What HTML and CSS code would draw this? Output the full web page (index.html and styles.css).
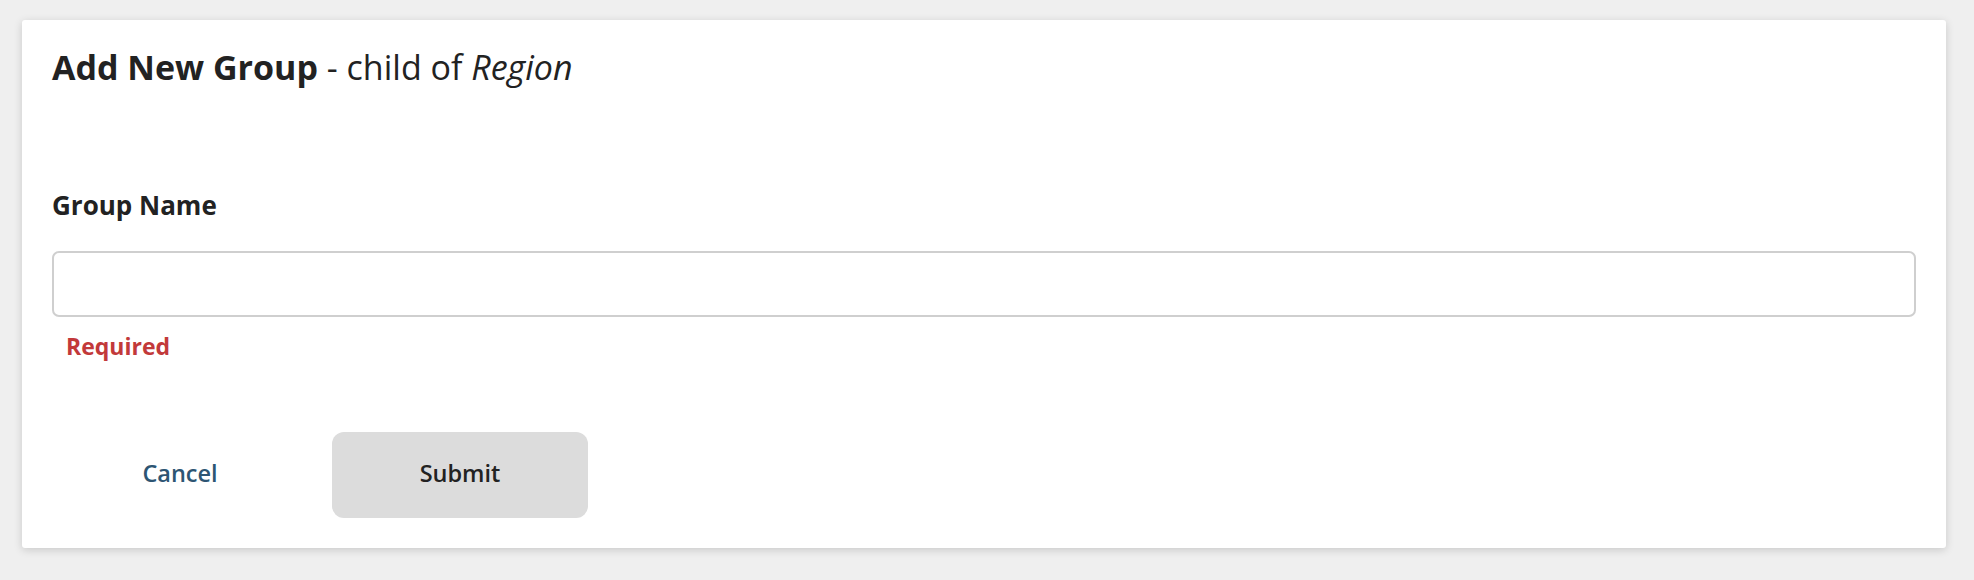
FILE: index.html
```html
<!DOCTYPE html>
<html lang="en">
<head>
<meta charset="utf-8">
<title>Add New Group</title>
<link rel="stylesheet" href="styles.css">
</head>
<body>
<main class="page">
  <section class="card">
    <h1 class="title"><strong>Add New Group</strong> - child of <em>Region</em></h1>
    <form class="form">
      <label class="label" for="group-name">Group Name</label>
      <input class="input" id="group-name" type="text">
      <div class="error">Required</div>
      <div class="actions">
        <button type="button" class="btn btn-cancel">Cancel</button>
        <button type="submit" class="btn btn-submit">Submit</button>
      </div>
    </form>
  </section>
</main>
</body>
</html>
```

FILE: styles.css
```css
* { box-sizing: border-box; }
html, body { margin: 0; padding: 0; }
body {
  background: #efefef;
  font-family: "Open Sans", "Lato", sans-serif;
  color: #222;
}
.page {
  padding: 20px 28px 32px 22px;
}
.card {
  background: #fff;
  border-radius: 3px;
  box-shadow: 0 2px 8px rgba(0, 0, 0, 0.16);
  padding: 27px 30px 30px 30px;
}
.title {
  margin: 0;
  font-size: 34px;
  line-height: 40px;
  font-weight: 400;
  color: #222;
}
.title strong { font-weight: 700; }
.title em { font-style: italic; }
.form {
  display: flex;
  flex-direction: column;
  margin-top: 103px;
}
.label {
  font-size: 26px;
  line-height: 30px;
  font-weight: 700;
  color: #222;
}
.input {
  margin-top: 31px;
  height: 66px;
  border: 2px solid #cfcfcf;
  border-radius: 7px;
  background: #fff;
  font: inherit;
  font-size: 24px;
  padding: 0 16px;
  outline: none;
}
.error {
  margin-top: 15px;
  padding-left: 14px;
  font-size: 23px;
  line-height: 28px;
  font-weight: 700;
  color: #c2393a;
}
.actions {
  display: flex;
  gap: 24px;
  margin-top: 72px;
}
.btn {
  width: 256px;
  height: 86px;
  border: none;
  border-radius: 12px;
  font-family: inherit;
  font-size: 23.5px;
  font-weight: 600;
  padding: 0 0 4px 0;
  cursor: pointer;
}
.btn-cancel {
  background: transparent;
  color: #2d5573;
}
.btn-submit {
  background: #dcdcdc;
  color: #222;
}
```
